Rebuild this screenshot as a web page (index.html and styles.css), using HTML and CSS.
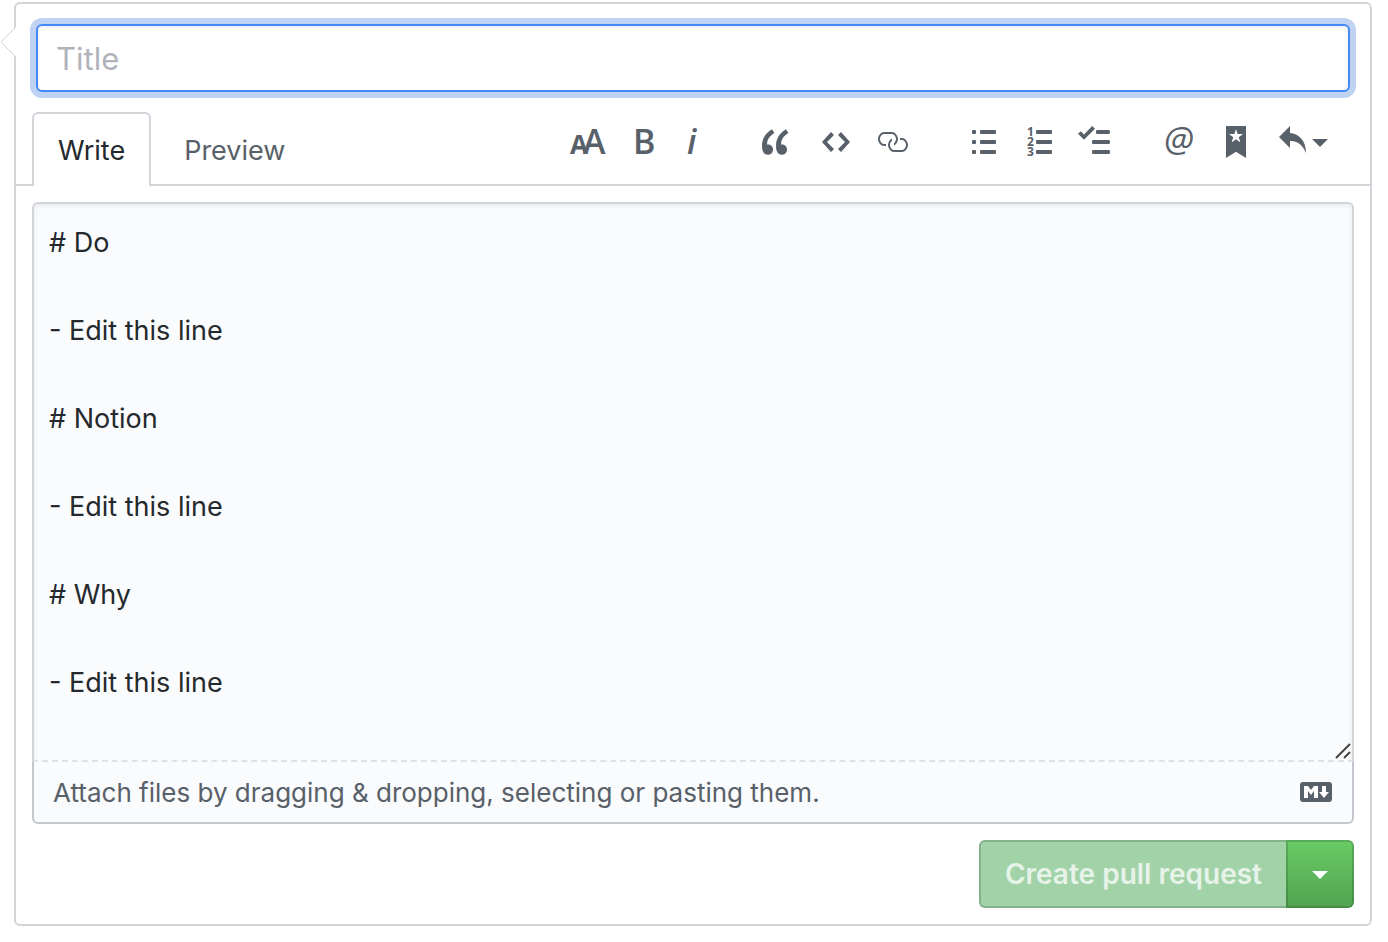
FILE: index.html
```html
<!DOCTYPE html>
<html lang="en">
<head>
<meta charset="utf-8">
<title>Open a pull request</title>
<link rel="stylesheet" href="styles.css">
</head>
<body>
<form class="card">
  <svg class="pointer" width="16" height="30" viewBox="0 0 16 30" aria-hidden="true"><path class="pointer-fill" d="M16 0L1 15l15 15z"/><path class="pointer-line" d="M15 1L1 15l14 14"/></svg>
  <div class="title-row">
    <input class="title-input" type="text" placeholder="Title" aria-label="Title">
  </div>
  <div class="tabnav">
    <div class="tabs">
      <button type="button" class="tab selected">Write</button>
      <button type="button" class="tab">Preview</button>
    </div>
    <div class="toolbar">
      <div class="group">
        <button type="button" class="tool" aria-label="Add header text"><svg width="36" height="32" viewBox="0 0 36 32"><text class="letter heavy" x="0" y="28" font-size="26">A</text><text class="letter" x="13" y="28" font-size="34">A</text></svg></button>
        <button type="button" class="tool" aria-label="Add bold text"><svg width="20" height="32" viewBox="0 0 20 32"><text class="letter" x="-1" y="28" font-size="34">B</text></svg></button>
        <button type="button" class="tool narrow" aria-label="Add italic text"><svg width="12" height="32" viewBox="0 0 12 32"><text class="letter slanted" x="1" y="28" font-size="34">i</text></svg></button>
      </div>
      <div class="group">
        <button type="button" class="tool wide" aria-label="Insert a quote"><svg width="28" height="32" viewBox="0 0 14 16"><path d="M6.16 3.5C3.73 5.06 2.55 6.67 2.55 9.36c.16-.05.3-.05.44-.05 1.27 0 2.5.86 2.5 2.41 0 1.61-1.03 2.61-2.5 2.61-1.9 0-2.99-1.52-2.99-4.25 0-3.8 1.75-6.53 5.02-8.42L6.16 3.5zm7 0c-2.43 1.56-3.61 3.17-3.61 5.86.16-.05.3-.05.44-.05 1.27 0 2.5.86 2.5 2.41 0 1.61-1.03 2.61-2.5 2.61-1.89 0-2.98-1.52-2.98-4.25 0-3.8 1.75-6.53 5.02-8.42l1.14 1.84h-.01z"/></svg></button>
        <button type="button" class="tool" aria-label="Insert code"><svg width="28" height="32" viewBox="0 0 14 16"><path d="M9.5 3L8 4.5 11.5 8 8 11.5 9.5 13 14 8 9.5 3zm-5 0L0 8l4.5 5L6 11.5 2.5 8 6 4.5 4.5 3z"/></svg></button>
        <button type="button" class="tool" aria-label="Add a link"><svg width="32" height="32" viewBox="0 0 16 16"><path d="M4 9h1v1H4c-1.5 0-3-1.69-3-3.5S2.55 3 4 3h4c1.45 0 3 1.69 3 3.5 0 1.41-.91 2.72-2 3.25V8.59c.58-.45 1-1.27 1-2.09C10 5.22 8.98 4 8 4H4c-.98 0-2 1.22-2 2.5S3 9 4 9zm9-3h-1v1h1c1 0 2 1.22 2 2.5S13.98 12 13 12H9c-.98 0-2-1.22-2-2.5 0-.83.42-1.64 1-2.09V6.25c-1.09.53-2 1.84-2 3.25C6 11.31 7.55 13 9 13h4c1.45 0 3-1.69 3-3.5S14.5 6 13 6z"/></svg></button>
      </div>
      <div class="group lists">
        <button type="button" class="tool" aria-label="Add a bulleted list"><svg width="24" height="32" viewBox="0 0 24 32"><rect x="0" y="4" width="4" height="4" rx="1"/><rect x="0" y="14" width="4" height="4" rx="1"/><rect x="0" y="24" width="4" height="4" rx="1"/><rect x="8" y="4" width="16" height="4" rx="1"/><rect x="8" y="14" width="16" height="4" rx="1"/><rect x="8" y="24" width="16" height="4" rx="1"/></svg></button>
        <button type="button" class="tool" aria-label="Add a numbered list"><svg width="24" height="32" viewBox="0 0 24 32"><text class="digit" x="-1" y="10">1</text><text class="digit" x="-1" y="20">2</text><text class="digit" x="-1" y="30">3</text><rect x="8" y="4" width="16" height="4" rx="1"/><rect x="8" y="14" width="16" height="4" rx="1"/><rect x="8" y="24" width="16" height="4" rx="1"/></svg></button>
        <button type="button" class="tool snug" aria-label="Add a task list"><svg width="32" height="32" viewBox="0 0 16 16"><path d="M15.41 9H7.59C7 9 7 8.59 7 8c0-.59 0-1 .59-1h7.81c.59 0 .59.41.59 1 0 .59 0 1-.59 1h.01zM9.59 4C9 4 9 3.59 9 3c0-.59 0-1 .59-1h5.81c.59 0 .59.41.59 1 0 .59 0 1-.59 1H9.59zM0 3.91l1.41-1.3L3 4.2 7.09 0 8.5 1.41 3 6.91l-3-3zM7.59 12h7.81c.59 0 .59.41.59 1 0 .59 0 1-.59 1H7.59C7 14 7 13.59 7 13c0-.59 0-1 .59-1z"/></svg></button>
      </div>
      <div class="group">
        <button type="button" class="tool" aria-label="Mention a user or team"><svg width="28" height="32" viewBox="0 0 28 32"><text class="at" x="-2" y="26">@</text></svg></button>
        <button type="button" class="tool" aria-label="Reference an issue or pull request"><svg width="20" height="32" viewBox="0 0 10 16"><path fill-rule="evenodd" d="M0 0v16l5-3.09L10 16V0zM8.22 4.25L6.36 5.61l.72 2.16c.06.22-.02.28-.2.17L5 6.6 3.12 7.94c-.19.11-.25.05-.2-.17l.72-2.16-1.86-1.36c-.17-.16-.14-.23.09-.23l2.3-.03.7-2.16h.25l.7 2.16 2.3.03c.23 0 .27.08.09.23h.01z"/></svg></button>
        <button type="button" class="tool reply" aria-label="Insert a saved reply"><svg width="28" height="32" viewBox="0 0 14 16"><path d="M6 3.5c3.92.44 8 3.125 8 10-2.312-5.062-4.75-6-8-6V11L.5 5.5 6 0v3.5z"/></svg><span class="caret"></span></button>
      </div>
    </div>
  </div>
  <div class="editor">
    <div class="field">
      <textarea class="body-input" rows="12" aria-label="Description"># Do

- Edit this line

# Notion

- Edit this line

# Why

- Edit this line
</textarea>
      <svg class="grip" width="16" height="16" viewBox="0 0 16 16" aria-hidden="true"><path d="M1 15L15 1M9 15l6-6"/></svg>
    </div>
    <div class="attach">
      <label class="attach-label" for="files">Attach files by dragging &amp; dropping, selecting or pasting them.</label>
      <input id="files" type="file" hidden>
      <a class="markdown" href="#markdown" aria-label="Styling with Markdown is supported"><svg width="32" height="20" viewBox="0 0 32 20"><rect width="32" height="20" rx="3"/><path class="mark" d="M4 16V4h4l3 4 3-4h4v12h-4V9l-3 4-3-4v7z"/><path class="mark" d="M22 4h4v6h3l-5 6-5-6h3z"/></svg></a>
    </div>
  </div>
  <div class="actions">
    <button type="submit" class="create" disabled>Create pull request</button>
    <button type="button" class="options" aria-label="Select a type of pull request"><span class="caret"></span></button>
  </div>
</form>
</body>
</html>
```
FILE: styles.css
```css
* { box-sizing: border-box; }
body {
  margin: 0;
  padding: 2px 16px 16px 14px;
  background: #fff;
  color: #24292e;
  font-family: Inter, "Liberation Sans", sans-serif;
  font-size: 27px;
}
button, input, textarea { font: inherit; color: inherit; margin: 0; }
button { padding: 0; border: 0; background: none; }
svg { display: block; flex: none; }

.card {
  position: relative;
  border: 2px solid #d1d5da;
  border-radius: 6px;
}
.pointer { position: absolute; left: -16px; top: 23px; }
.pointer-fill { fill: #fff; }
.pointer-line { fill: none; stroke: #d1d5da; stroke-width: 1; }

.title-row { padding: 20px 20px 0; }
.title-input {
  display: block;
  width: 100%;
  height: 68px;
  padding: 0 18px;
  border: 2px solid #4389f7;
  border-radius: 6px;
  outline: 0;
  background: #fff;
  font-size: 31px;
  box-shadow: inset 0 2px 4px rgba(27, 31, 35, .07), 0 0 0 6px #bfd2f2;
}
.title-input::placeholder { color: #b0b4ba; opacity: 1; }

.tabnav {
  display: flex;
  justify-content: space-between;
  margin-top: 20px;
  padding: 0 28px 0 16px;
  border-bottom: 2px solid #d1d5da;
}
.tabs { display: flex; margin-bottom: -2px; }
.tab {
  height: 74px;
  padding: 0 31px;
  border: 2px solid transparent;
  border-bottom: 0;
  color: #586069;
}
.tab.selected {
  padding: 0 24px;
  border-color: #d1d5da;
  border-radius: 6px 6px 0 0;
  background: #fff;
  color: #24292e;
}
.toolbar { display: flex; gap: 32px; padding-top: 14px; height: 46px; }
.group { display: flex; }
.lists { margin-left: 4px; }
.tool {
  display: flex;
  align-items: center;
  justify-content: center;
  width: 56px;
  height: 32px;
  color: #586069;
}
.tool svg { fill: #586069; overflow: visible; }
.narrow { width: 40px; }
.snug { width: 52px; }
.wide { width: 64px; }
.reply { width: 78px; gap: 6px; }
.letter { font-family: "Open Sans", "Noto Sans", sans-serif; font-weight: 600; }
.heavy { font-weight: 700; }
.slanted { font-style: italic; }
.digit { font: 700 12px "Open Sans", "Noto Sans", sans-serif; }
.at { font: italic 400 35px "Open Sans", "Noto Sans", sans-serif; }
.caret {
  margin-top: 2px;
  border: 8px solid transparent;
  border-top-color: currentColor;
  border-bottom: 0;
}

.editor {
  margin: 16px 16px 0;
  border-radius: 6px;
  background: #fafbfc;
}
.field { position: relative; }
.body-input {
  display: block;
  width: 100%;
  padding: 17px 15px 11px;
  border: 2px solid #d1d5da;
  border-bottom: 0;
  border-radius: 6px 6px 0 0;
  outline: 0;
  resize: none;
  overflow: hidden;
  background: #fafbfc;
  line-height: 44px;
  box-shadow: inset 0 2px 4px rgba(27, 31, 35, .08);
}
.grip { position: absolute; right: 3px; bottom: 1px; }
.grip path { stroke: #444; stroke-width: 2; }
.attach {
  display: flex;
  align-items: center;
  justify-content: space-between;
  height: 64px;
  padding: 0 20px 0 19px;
  border: 2px solid #c3c8cf;
  border-top: 2px dashed #dfe2e5;
  border-radius: 0 0 6px 6px;
  color: #586069;
}
.attach-label { font-size: 26px; }
.markdown svg { fill: #586069; }
.markdown .mark { fill: #fff; }

.actions {
  display: flex;
  justify-content: flex-end;
  padding: 16px;
}
.create {
  height: 68px;
  padding: 0 24px;
  border: 2px solid #86b18d;
  border-right: 0;
  border-radius: 6px 0 0 6px;
  background: #a2d2a8;
  color: #e6f3e8;
  font-size: 28px;
  font-weight: 600;
}
.options {
  display: flex;
  align-items: center;
  justify-content: center;
  width: 68px;
  height: 68px;
  border: 2px solid rgba(27, 60, 35, .22);
  border-radius: 0 6px 6px 0;
  background: linear-gradient(#69cb66, #52a350) border-box;
  color: #fff;
}
```
